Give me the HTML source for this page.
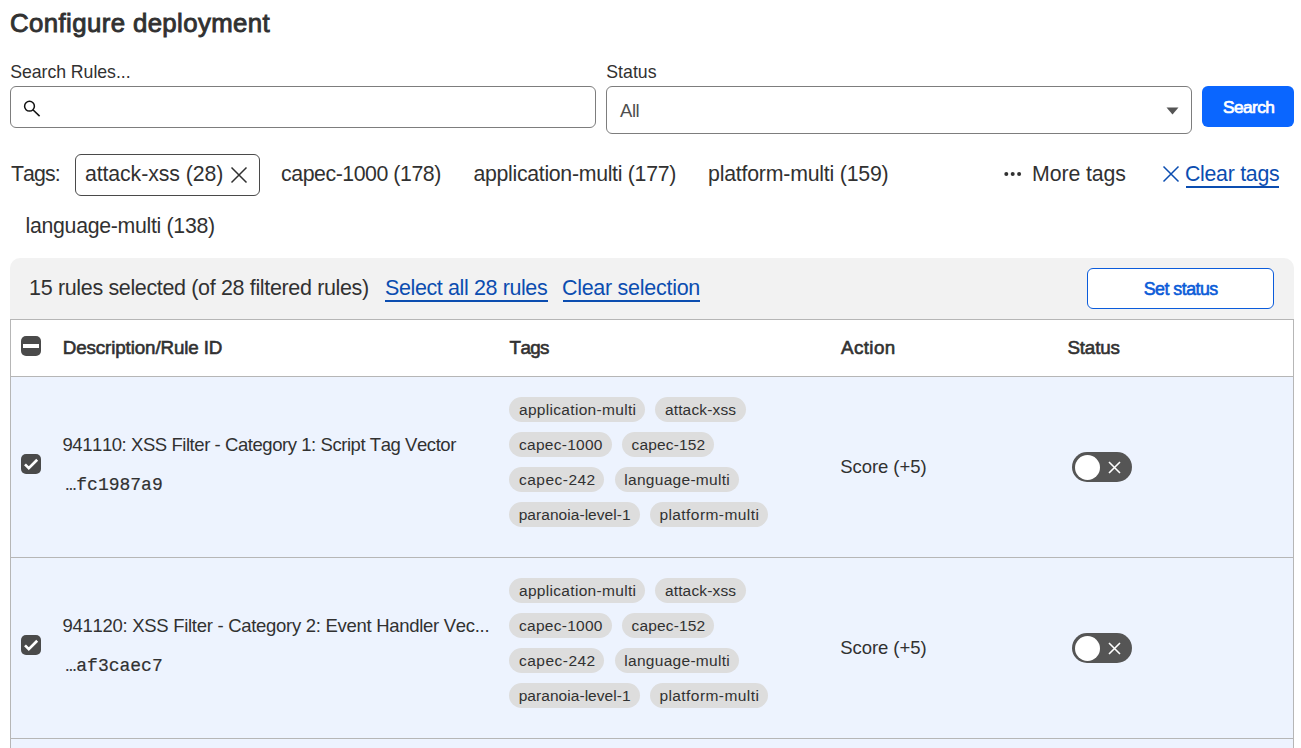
<!DOCTYPE html>
<html><head><meta charset="utf-8"><style>
html,body{margin:0;padding:0;background:#fff;width:1301px;height:748px;overflow:hidden;position:relative;font-family:"Liberation Sans",sans-serif;}
.t{position:absolute;white-space:nowrap;line-height:1;font-kerning:none;}
.b{position:absolute;box-sizing:border-box;}
</style></head><body>
<div class="t" style="left:10.1px;top:11.46px;font-size:25.80px;letter-spacing:0.38px;font-weight:400;color:#313131;-webkit-text-stroke:0.9px #313131;">Configure deployment</div>
<div class="t" style="left:10.2px;top:64.01px;font-size:17.70px;letter-spacing:-0.04px;font-weight:400;color:#313131;">Search Rules...</div>
<div class="t" style="left:606.2px;top:64.01px;font-size:17.70px;letter-spacing:0.05px;font-weight:400;color:#313131;">Status</div>
<div class="b" style="left:10px;top:86px;width:586px;height:42px;border:1px solid #7d7d7d;border-radius:6px;background:#fff"></div>
<svg class="b" style="left:23px;top:100px" width="18" height="18" viewBox="0 0 18 18"><circle cx="6.5" cy="6.2" r="4.9" fill="none" stroke="#111" stroke-width="1.5"/><line x1="9.9" y1="9.7" x2="16.6" y2="16.1" stroke="#111" stroke-width="1.5"/></svg>
<div class="b" style="left:606px;top:86px;width:586px;height:48px;border:1px solid #7d7d7d;border-radius:6px;background:#fff"></div>
<div class="t" style="left:620.0px;top:101.74px;font-size:18.50px;letter-spacing:-0.44px;font-weight:400;color:#4f4f4f;">All</div>
<svg class="b" style="left:1166.2px;top:107px" width="13" height="8" viewBox="0 0 13 8"><path d="M0.5 0.5 L12.5 0.5 L6.5 7.5 Z" fill="#555"/></svg>
<div class="b" style="left:1202px;top:86px;width:92px;height:41px;border-radius:6px;background:#0a66ff"></div>
<div class="t" style="left:1222.9px;top:99.15px;font-size:17.30px;letter-spacing:-0.54px;font-weight:400;color:#fff;-webkit-text-stroke:0.7px #fff;">Search</div>
<div class="t" style="left:10.9px;top:164.27px;font-size:21.30px;letter-spacing:-0.86px;font-weight:400;color:#313131;">Tags:</div>
<div class="b" style="left:75px;top:154px;width:185px;height:42px;border:1px solid #4a4a4a;border-radius:6px;"></div>
<div class="t" style="left:84.9px;top:164.27px;font-size:21.30px;letter-spacing:-0.09px;font-weight:400;color:#313131;">attack-xss (28)</div>
<svg class="b" style="left:230px;top:166px" width="18" height="18" viewBox="0 0 18 18"><path d="M1.5 1.5 L16.5 16.5 M16.5 1.5 L1.5 16.5" stroke="#313131" stroke-width="1.5"/></svg>
<div class="t" style="left:281.1px;top:164.27px;font-size:21.30px;letter-spacing:-0.45px;font-weight:400;color:#313131;">capec-1000 (178)</div>
<div class="t" style="left:473.4px;top:164.27px;font-size:21.30px;letter-spacing:-0.30px;font-weight:400;color:#313131;">application-multi (177)</div>
<div class="t" style="left:708.0px;top:164.27px;font-size:21.30px;letter-spacing:-0.21px;font-weight:400;color:#313131;">platform-multi (159)</div>
<svg class="b" style="left:1004px;top:171px" width="18" height="6" viewBox="0 0 18 6"><circle cx="2.3" cy="3" r="2" fill="#313131"/><circle cx="8.7" cy="3" r="2" fill="#313131"/><circle cx="15.1" cy="3" r="2" fill="#313131"/></svg>
<div class="t" style="left:1032.1px;top:164.27px;font-size:21.30px;letter-spacing:-0.12px;font-weight:400;color:#313131;">More tags</div>
<svg class="b" style="left:1162px;top:165px" width="18" height="18" viewBox="0 0 18 18"><path d="M1.5 1.5 L16.5 16.5 M16.5 1.5 L1.5 16.5" stroke="#0b4db0" stroke-width="1.5"/></svg>
<div class="t" style="left:1184.9px;top:164.27px;font-size:21.30px;letter-spacing:-0.25px;font-weight:400;color:#0b4db0;">Clear tags</div>
<div class="b" style="left:1186px;top:186px;width:93px;height:2px;background:#0b4db0"></div>
<div class="t" style="left:25.6px;top:216.17px;font-size:21.30px;letter-spacing:-0.31px;font-weight:400;color:#313131;">language-multi (138)</div>
<div class="b" style="left:10px;top:258px;width:1284px;height:62px;background:#f2f2f2;border-radius:10px 10px 0 0"></div>
<div class="t" style="left:29.1px;top:277.80px;font-size:21.50px;letter-spacing:-0.35px;font-weight:400;color:#313131;">15 rules selected (of 28 filtered rules)</div>
<div class="t" style="left:385.0px;top:277.60px;font-size:21.50px;letter-spacing:-0.39px;font-weight:400;color:#0b4db0;">Select all 28 rules</div>
<div class="b" style="left:385px;top:300px;width:163px;height:2px;background:#0b4db0"></div>
<div class="t" style="left:561.9px;top:277.60px;font-size:21.50px;letter-spacing:-0.27px;font-weight:400;color:#0b4db0;">Clear selection</div>
<div class="b" style="left:563px;top:300px;width:137px;height:2px;background:#0b4db0"></div>
<div class="b" style="left:1087px;top:268px;width:187px;height:41px;border:1.5px solid #0b5cdb;border-radius:6px;background:#fff"></div>
<div class="t" style="left:1143.7px;top:281.33px;font-size:17.80px;letter-spacing:-0.50px;font-weight:400;color:#0a5bd8;-webkit-text-stroke:0.6px #0a5bd8;">Set status</div>
<div class="b" style="left:10px;top:319px;width:1284px;height:440px;border:1px solid #b6b6b6;border-bottom:none;background:#fff"></div>
<div class="b" style="left:11px;top:376px;width:1282px;height:372px;background:#edf3fe"></div>
<div class="b" style="left:11px;top:376px;width:1282px;height:1px;background:#b6b6b6"></div>
<div class="b" style="left:11px;top:557px;width:1282px;height:1px;background:#b6b6b6"></div>
<div class="b" style="left:11px;top:738px;width:1282px;height:1px;background:#b6b6b6"></div>
<div class="b" style="left:21px;top:336px;width:20px;height:20px;border-radius:5px;background:#4a4a4a"></div>
<div class="b" style="left:23px;top:344.3px;width:16px;height:3.4px;background:#fff"></div>
<div class="t" style="left:62.8px;top:338.58px;font-size:18.80px;letter-spacing:-0.12px;font-weight:400;color:#313131;-webkit-text-stroke:0.6px #313131;">Description/Rule ID</div>
<div class="t" style="left:509.6px;top:338.58px;font-size:18.80px;letter-spacing:-0.66px;font-weight:400;color:#313131;-webkit-text-stroke:0.6px #313131;">Tags</div>
<div class="t" style="left:841.0px;top:338.58px;font-size:18.80px;letter-spacing:0.40px;font-weight:400;color:#313131;-webkit-text-stroke:0.6px #313131;">Action</div>
<div class="t" style="left:1067.4px;top:338.58px;font-size:18.80px;letter-spacing:-0.15px;font-weight:400;color:#313131;-webkit-text-stroke:0.6px #313131;">Status</div>
<div class="b" style="left:21px;top:454.0px;width:20px;height:20px;border-radius:5px;background:#4a4a4a"></div>
<svg class="b" style="left:21px;top:454.0px" width="20" height="20" viewBox="0 0 20 20"><path d="M4 10.4 L7.8 14.2 L16.2 5.8" fill="none" stroke="#fff" stroke-width="2.7" stroke-linecap="butt" stroke-linejoin="miter"/></svg>
<div class="t" style="left:62.5px;top:436.14px;font-size:18.50px;letter-spacing:-0.44px;font-weight:400;color:#313131;">941110: XSS Filter - Category 1: Script Tag Vector</div>
<div class="t" style="left:65.5px;top:476.21px;font-size:18.00px;letter-spacing:0.00px;font-weight:400;color:#313131;font-family:'Liberation Mono',monospace;-webkit-text-stroke:0.2px #313131;">…fc1987a9</div>
<div class="b" style="left:509.3px;top:397.0px;width:135.6px;height:25px;border-radius:13px;background:#dddddd"></div>
<div class="t" style="left:519.0px;top:401.88px;font-size:15.50px;letter-spacing:0.31px;font-weight:400;color:#313131;">application-multi</div>
<div class="b" style="left:655.2px;top:397.0px;width:90.4px;height:25px;border-radius:13px;background:#dddddd"></div>
<div class="t" style="left:664.9px;top:401.88px;font-size:15.50px;letter-spacing:0.16px;font-weight:400;color:#313131;">attack-xss</div>
<div class="b" style="left:509.3px;top:432.0px;width:102.6px;height:25px;border-radius:13px;background:#dddddd"></div>
<div class="t" style="left:519.0px;top:436.88px;font-size:15.50px;letter-spacing:0.27px;font-weight:400;color:#313131;">capec-1000</div>
<div class="b" style="left:621.8px;top:432.0px;width:92.7px;height:25px;border-radius:13px;background:#dddddd"></div>
<div class="t" style="left:631.5px;top:436.88px;font-size:15.50px;letter-spacing:0.17px;font-weight:400;color:#313131;">capec-152</div>
<div class="b" style="left:509.3px;top:467.0px;width:95.2px;height:25px;border-radius:13px;background:#dddddd"></div>
<div class="t" style="left:519.0px;top:471.88px;font-size:15.50px;letter-spacing:0.48px;font-weight:400;color:#313131;">capec-242</div>
<div class="b" style="left:614.9px;top:467.0px;width:123.8px;height:25px;border-radius:13px;background:#dddddd"></div>
<div class="t" style="left:624.3px;top:471.88px;font-size:15.50px;letter-spacing:0.29px;font-weight:400;color:#313131;">language-multi</div>
<div class="b" style="left:509.3px;top:502.0px;width:130.5px;height:25px;border-radius:13px;background:#dddddd"></div>
<div class="t" style="left:518.7px;top:506.88px;font-size:15.50px;letter-spacing:0.05px;font-weight:400;color:#313131;">paranoia-level-1</div>
<div class="b" style="left:650.0px;top:502.0px;width:117.8px;height:25px;border-radius:13px;background:#dddddd"></div>
<div class="t" style="left:659.4px;top:506.88px;font-size:15.50px;letter-spacing:0.43px;font-weight:400;color:#313131;">platform-multi</div>
<div class="t" style="left:840.2px;top:457.54px;font-size:18.50px;letter-spacing:-0.05px;font-weight:400;color:#313131;">Score (+5)</div>
<div class="b" style="left:1072px;top:452.0px;width:60px;height:30px;border-radius:15px;background:#555"></div>
<div class="b" style="left:1075px;top:454.5px;width:25px;height:25px;border-radius:50%;background:#fff"></div>
<svg class="b" style="left:1108px;top:461.0px" width="13" height="13" viewBox="0 0 13 13"><path d="M1 1 L12 12 M12 1 L1 12" stroke="#fff" stroke-width="1.6"/></svg>
<div class="b" style="left:21px;top:635.0px;width:20px;height:20px;border-radius:5px;background:#4a4a4a"></div>
<svg class="b" style="left:21px;top:635.0px" width="20" height="20" viewBox="0 0 20 20"><path d="M4 10.4 L7.8 14.2 L16.2 5.8" fill="none" stroke="#fff" stroke-width="2.7" stroke-linecap="butt" stroke-linejoin="miter"/></svg>
<div class="t" style="left:62.5px;top:617.14px;font-size:18.50px;letter-spacing:-0.29px;font-weight:400;color:#313131;">941120: XSS Filter - Category 2: Event Handler Vec...</div>
<div class="t" style="left:65.5px;top:657.21px;font-size:18.00px;letter-spacing:0.00px;font-weight:400;color:#313131;font-family:'Liberation Mono',monospace;-webkit-text-stroke:0.2px #313131;">…af3caec7</div>
<div class="b" style="left:509.3px;top:578.0px;width:135.6px;height:25px;border-radius:13px;background:#dddddd"></div>
<div class="t" style="left:519.0px;top:582.88px;font-size:15.50px;letter-spacing:0.31px;font-weight:400;color:#313131;">application-multi</div>
<div class="b" style="left:655.2px;top:578.0px;width:90.4px;height:25px;border-radius:13px;background:#dddddd"></div>
<div class="t" style="left:664.9px;top:582.88px;font-size:15.50px;letter-spacing:0.16px;font-weight:400;color:#313131;">attack-xss</div>
<div class="b" style="left:509.3px;top:613.0px;width:102.6px;height:25px;border-radius:13px;background:#dddddd"></div>
<div class="t" style="left:519.0px;top:617.88px;font-size:15.50px;letter-spacing:0.27px;font-weight:400;color:#313131;">capec-1000</div>
<div class="b" style="left:621.8px;top:613.0px;width:92.7px;height:25px;border-radius:13px;background:#dddddd"></div>
<div class="t" style="left:631.5px;top:617.88px;font-size:15.50px;letter-spacing:0.17px;font-weight:400;color:#313131;">capec-152</div>
<div class="b" style="left:509.3px;top:648.0px;width:95.2px;height:25px;border-radius:13px;background:#dddddd"></div>
<div class="t" style="left:519.0px;top:652.88px;font-size:15.50px;letter-spacing:0.48px;font-weight:400;color:#313131;">capec-242</div>
<div class="b" style="left:614.9px;top:648.0px;width:123.8px;height:25px;border-radius:13px;background:#dddddd"></div>
<div class="t" style="left:624.3px;top:652.88px;font-size:15.50px;letter-spacing:0.29px;font-weight:400;color:#313131;">language-multi</div>
<div class="b" style="left:509.3px;top:683.0px;width:130.5px;height:25px;border-radius:13px;background:#dddddd"></div>
<div class="t" style="left:518.7px;top:687.88px;font-size:15.50px;letter-spacing:0.05px;font-weight:400;color:#313131;">paranoia-level-1</div>
<div class="b" style="left:650.0px;top:683.0px;width:117.8px;height:25px;border-radius:13px;background:#dddddd"></div>
<div class="t" style="left:659.4px;top:687.88px;font-size:15.50px;letter-spacing:0.43px;font-weight:400;color:#313131;">platform-multi</div>
<div class="t" style="left:840.2px;top:638.54px;font-size:18.50px;letter-spacing:-0.05px;font-weight:400;color:#313131;">Score (+5)</div>
<div class="b" style="left:1072px;top:633.0px;width:60px;height:30px;border-radius:15px;background:#555"></div>
<div class="b" style="left:1075px;top:635.5px;width:25px;height:25px;border-radius:50%;background:#fff"></div>
<svg class="b" style="left:1108px;top:642.0px" width="13" height="13" viewBox="0 0 13 13"><path d="M1 1 L12 12 M12 1 L1 12" stroke="#fff" stroke-width="1.6"/></svg>
</body></html>
